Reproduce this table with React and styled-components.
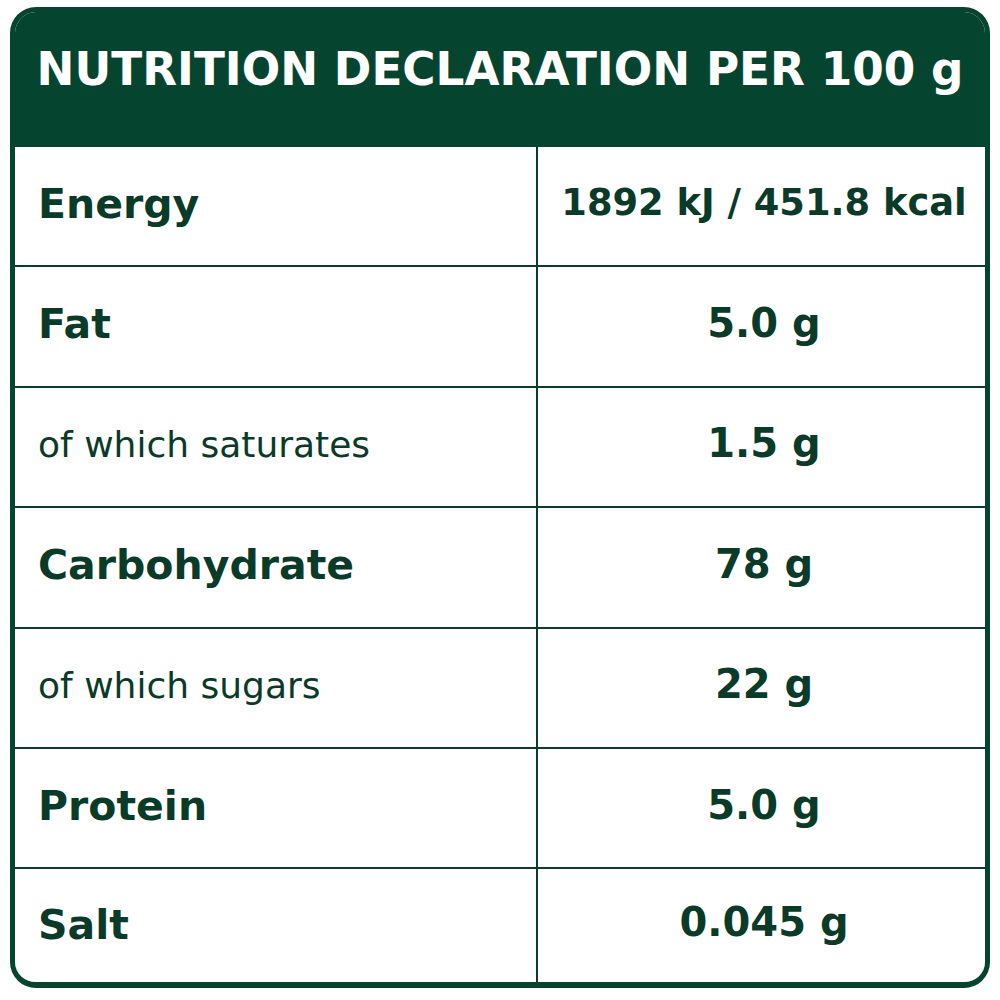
import React from "react";
import styled, { createGlobalStyle } from "styled-components";

const Global = createGlobalStyle`
  html, body { margin: 0; padding: 0; background: #ffffff; }
  body { font-family: "DejaVu Sans", "Liberation Sans", sans-serif; }
`;

const Page = styled.div`
  width: 1000px;
  height: 1000px;
  padding: 7px 10px 0 10px;
  box-sizing: border-box;
`;

const Card = styled.div`
  width: 980px;
  height: 981px;
  box-sizing: border-box;
  border: 5px solid #05452f;
  border-bottom-width: 6px;
  border-radius: 26px;
  overflow: hidden;
  display: flex;
  flex-direction: column;
  background: #ffffff;
`;

const Header = styled.div`
  height: 135px;
  flex: none;
  background: #05452f;
  color: #ffffff;
  display: flex;
  align-items: center;
  justify-content: center;
  padding-bottom: 20px;
  box-sizing: border-box;
  font-weight: bold;
  font-size: 45.3px;
  white-space: nowrap;
`;

const Table = styled.div`
  flex: 1;
  display: grid;
  grid-template-columns: 521px 1fr;
  grid-template-rows: repeat(6, 118.4px) 1fr;
  gap: 2px;
  background: #0b3d29;
`;

const Cell = styled.div`
  background: #ffffff;
  display: flex;
  align-items: center;
  box-sizing: border-box;
  color: #0a3a28;
  white-space: nowrap;
`;

const Label = styled(Cell)`
  padding-left: 23px;
  padding-bottom: ${(p) => (p.$last ? "2px" : "5px")};
  font-weight: ${(p) => (p.$sub ? "normal" : "bold")};
  font-size: ${(p) => (p.$sub ? "36px" : "41px")};
`;

const Value = styled(Cell)`
  justify-content: center;
  padding-left: 5px;
  padding-bottom: 7px;
  font-weight: bold;
  font-size: ${(p) => (p.$small ? "36.8px" : "40px")};
`;

const rows = [
  { label: "Energy", value: "1892 kJ / 451.8 kcal", small: true },
  { label: "Fat", value: "5.0 g" },
  { label: "of which saturates", value: "1.5 g", sub: true },
  { label: "Carbohydrate", value: "78 g" },
  { label: "of which sugars", value: "22 g", sub: true },
  { label: "Protein", value: "5.0 g" },
  { label: "Salt", value: "0.045 g", last: true },
];

export default function App() {
  return (
    <>
      <Global />
      <Page>
        <Card>
          <Header>NUTRITION DECLARATION PER 100 g</Header>
          <Table>
            {rows.map((r) => (
              <React.Fragment key={r.label}>
                <Label $sub={r.sub} $last={r.last}>{r.label}</Label>
                <Value $small={r.small}>{r.value}</Value>
              </React.Fragment>
            ))}
          </Table>
        </Card>
      </Page>
    </>
  );
}
